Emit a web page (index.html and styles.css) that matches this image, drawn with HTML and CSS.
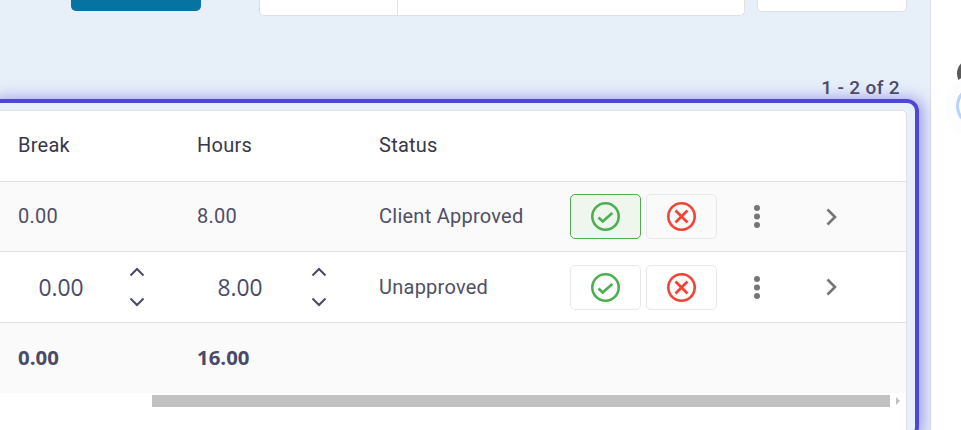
FILE: index.html
```html
<!DOCTYPE html>
<html lang="en">
<head>
  <meta charset="UTF-8">
  <title>Timesheet</title>
  <link rel="stylesheet" href="styles.css">
</head>
<body>
  <div class="page">
    <main class="main">
      <div class="top-bar">
        <div class="top-button"></div>
        <div class="top-search">
          <div class="top-search-left"></div>
        </div>
        <div class="top-filter"></div>
      </div>

      <div class="count">1 - 2 of 2</div>

      <section class="highlight">
        <div class="card">
          <div class="row head">
            <div class="col-break text-up">Break</div>
            <div class="col-hours text-up">Hours</div>
            <div class="col-status text-up">Status</div>
          </div>

          <div class="row row-short shaded">
            <div class="col-break text-up">0.00</div>
            <div class="col-hours text-up">8.00</div>
            <div class="col-status text-up">Client Approved</div>
            <div class="col-actions">
              <button class="action approved">
                <svg width="29" height="29" viewBox="0 0 29 29"><circle cx="14.500" cy="14.500" r="13.200" fill="none" stroke="#4caf50" stroke-width="2.600"/><path d="M7.500 15.500l4.200 4 9.600-8.400" fill="none" stroke="#4caf50" stroke-width="2.700"/></svg>
              </button>
              <button class="action">
                <svg width="29" height="29" viewBox="0 0 29 29"><circle cx="14.500" cy="14.500" r="13.200" fill="none" stroke="#f44336" stroke-width="2.600"/><path d="M8.500 8.500l12 12M20.500 8.500l-12 12" fill="none" stroke="#f44336" stroke-width="2.800"/></svg>
              </button>
            </div>
            <div class="col-menu">
              <svg width="6" height="23" viewBox="0 0 6 23"><circle cx="3" cy="3" r="3"/><circle cx="3" cy="11.500" r="3"/><circle cx="3" cy="20" r="3"/></svg>
            </div>
            <div class="col-open">
              <svg width="12" height="18" viewBox="0 0 12 18"><path d="M1.500 1.500L9 9l-7.500 7.500" fill="none" stroke="#757575" stroke-width="2.600"/></svg>
            </div>
          </div>

          <div class="row">
            <div class="col-break">
              <div class="stepper">
                <span class="stepper-value">0.00</span>
                <div class="stepper-arrows">
                  <svg width="16" height="10" viewBox="0 0 16 10"><path d="M1.500 8.500L8 2l6.500 6.500" fill="none" stroke="#4a4a68" stroke-width="2"/></svg>
                  <svg width="16" height="10" viewBox="0 0 16 10"><path d="M1.500 1.500L8 8l6.500-6.500" fill="none" stroke="#4a4a68" stroke-width="2"/></svg>
                </div>
              </div>
            </div>
            <div class="col-hours">
              <div class="stepper stepper-hours">
                <span class="stepper-value">8.00</span>
                <div class="stepper-arrows">
                  <svg width="16" height="10" viewBox="0 0 16 10"><path d="M1.500 8.500L8 2l6.500 6.500" fill="none" stroke="#4a4a68" stroke-width="2"/></svg>
                  <svg width="16" height="10" viewBox="0 0 16 10"><path d="M1.500 1.500L8 8l6.500-6.500" fill="none" stroke="#4a4a68" stroke-width="2"/></svg>
                </div>
              </div>
            </div>
            <div class="col-status">Unapproved</div>
            <div class="col-actions">
              <button class="action">
                <svg width="29" height="29" viewBox="0 0 29 29"><circle cx="14.500" cy="14.500" r="13.200" fill="none" stroke="#4caf50" stroke-width="2.600"/><path d="M7.500 15.500l4.200 4 9.600-8.400" fill="none" stroke="#4caf50" stroke-width="2.700"/></svg>
              </button>
              <button class="action">
                <svg width="29" height="29" viewBox="0 0 29 29"><circle cx="14.500" cy="14.500" r="13.200" fill="none" stroke="#f44336" stroke-width="2.600"/><path d="M8.500 8.500l12 12M20.500 8.500l-12 12" fill="none" stroke="#f44336" stroke-width="2.800"/></svg>
              </button>
            </div>
            <div class="col-menu">
              <svg width="6" height="23" viewBox="0 0 6 23"><circle cx="3" cy="3" r="3"/><circle cx="3" cy="11.500" r="3"/><circle cx="3" cy="20" r="3"/></svg>
            </div>
            <div class="col-open">
              <svg width="12" height="18" viewBox="0 0 12 18"><path d="M1.500 1.500L9 9l-7.500 7.500" fill="none" stroke="#757575" stroke-width="2.600"/></svg>
            </div>
          </div>

          <div class="row shaded total">
            <div class="col-break text-up">0.00</div>
            <div class="col-hours text-up">16.00</div>
          </div>

          <div class="scroll-track">
            <div class="scroll-thumb"></div>
            <div class="scroll-arrow"></div>
          </div>
        </div>
      </section>
    </main>

    <aside class="side">
      <div class="side-badge"></div>
      <div class="side-ring"></div>
    </aside>
  </div>
</body>
</html>
```

FILE: styles.css
```css
html, body {
  margin: 0;
  height: 430px;
  overflow: hidden;
}
body {
  font-family: Roboto, sans-serif;
  color: #4f4f66;
  background-color: #fff;
}
.page {
  display: flex;
  width: 961px;
  height: 430px;
}
.main {
  width: 930px;
  flex: none;
  background-color: #e7eff9;
  border-right: 1px solid #dcdfe6;
}
.top-bar {
  display: flex;
  align-items: flex-start;
  height: 78px;
  padding-left: 71px;
}
.top-button {
  width: 130px;
  height: 11px;
  background-color: #0673a3;
  border-radius: 0 0 5px 5px;
}
.top-search {
  width: 484px;
  height: 15px;
  margin-left: 58px;
  background-color: #fff;
  border: 1px solid #e0e0e0;
  border-top: 0;
  border-radius: 0 0 5px 5px;
}
.top-search-left {
  width: 137px;
  height: 15px;
  border-right: 1px solid #e0e0e0;
}
.top-filter {
  width: 148px;
  height: 11px;
  margin-left: 12px;
  background-color: #fff;
  border: 1px solid #e0e0e0;
  border-top: 0;
  border-radius: 0 0 5px 5px;
}
.count {
  height: 21px;
  padding-right: 30px;
  text-align: right;
  font-size: 19px;
  font-weight: 500;
  line-height: 19px;
  letter-spacing: 0.35px;
  color: #4a4a68;
}
.highlight {
  width: 931px;
  height: 340px;
  margin-left: -12px;
  padding: 7px 8px 0 0;
  box-sizing: border-box;
  border: 4px solid #4f46d8;
  border-radius: 12px;
  box-shadow: 3px 0 16px rgba(79, 70, 216, 0.55);
}
.card {
  height: 330px;
  background-color: #fff;
  border: 1px solid #e0e0e0;
  border-radius: 5px;
}
.row {
  display: flex;
  align-items: center;
  height: 70px;
  border-bottom: 1px solid #e0e0e0;
  font-size: 20px;
  letter-spacing: 0.25px;
}
.row-short {
  height: 69px;
}
.head {
  color: #37374a;
}
.shaded {
  background-color: #fafafa;
}
.total {
  border-bottom: 0;
  font-family: "Open Sans", sans-serif;
  font-size: 20.4px;
  font-weight: 700;
  letter-spacing: 0;
  color: #4a4a68;
}
.text-up {
  margin-bottom: 2px;
}
.col-break {
  width: 179px;
  margin-left: 25px;
  flex: none;
}
.col-hours {
  width: 182px;
  flex: none;
}
.col-status {
  width: 191px;
  flex: none;
}
.col-actions {
  display: flex;
  gap: 5px;
  width: 147px;
  flex: none;
}
.col-menu {
  display: flex;
  width: 109px;
  flex: none;
}
.col-menu svg {
  fill: #757575;
  margin-left: 37px;
}
.col-open {
  display: flex;
  flex: none;
}
.action {
  display: flex;
  align-items: center;
  justify-content: center;
  width: 71px;
  height: 45px;
  padding: 0;
  background-color: transparent;
  border: 1px solid #e8e8e8;
  border-radius: 5px;
}
.approved {
  background-color: #eef6ee;
  border-color: #4caf50;
}
.stepper {
  display: flex;
  align-items: center;
  width: 150px;
}
.stepper-value {
  width: 111px;
  padding-left: 20.5px;
  box-sizing: border-box;
  font-family: "Open Sans", sans-serif;
  font-size: 22.8px;
  letter-spacing: 0;
  color: #4a4a68;
}
.stepper-hours .stepper-value {
  width: 114px;
}
.stepper-arrows {
  display: flex;
  flex-direction: column;
  gap: 20px;
}
.stepper-arrows svg {
  display: block;
}
.scroll-track {
  position: relative;
  height: 12px;
  margin: 2px 0 0 159px;
}
.scroll-thumb {
  width: 738px;
  height: 12px;
  background-color: #c1c1c1;
}
.scroll-arrow {
  position: absolute;
  top: 2px;
  right: 6px;
  width: 0;
  height: 0;
  border-left: 4px solid #c1c1c1;
  border-top: 4px solid transparent;
  border-bottom: 4px solid transparent;
}
.side {
  flex: 1;
  display: flex;
  flex-direction: column;
  overflow: hidden;
  padding: 59px 0 0 25.500px;
  background-color: rgba(255, 255, 255, 0.8);
}
.side-badge {
  width: 21px;
  height: 21px;
  flex: none;
  border: 4px solid #5a5a5a;
  border-radius: 50%;
}
.side-ring {
  width: 36px;
  height: 36px;
  flex: none;
  margin: -3px 0 0 -0.500px;
  border: 3px solid #b5d3fb;
  border-radius: 50%;
  box-shadow: 0 0 0 11px #fdfdff;
}
```
